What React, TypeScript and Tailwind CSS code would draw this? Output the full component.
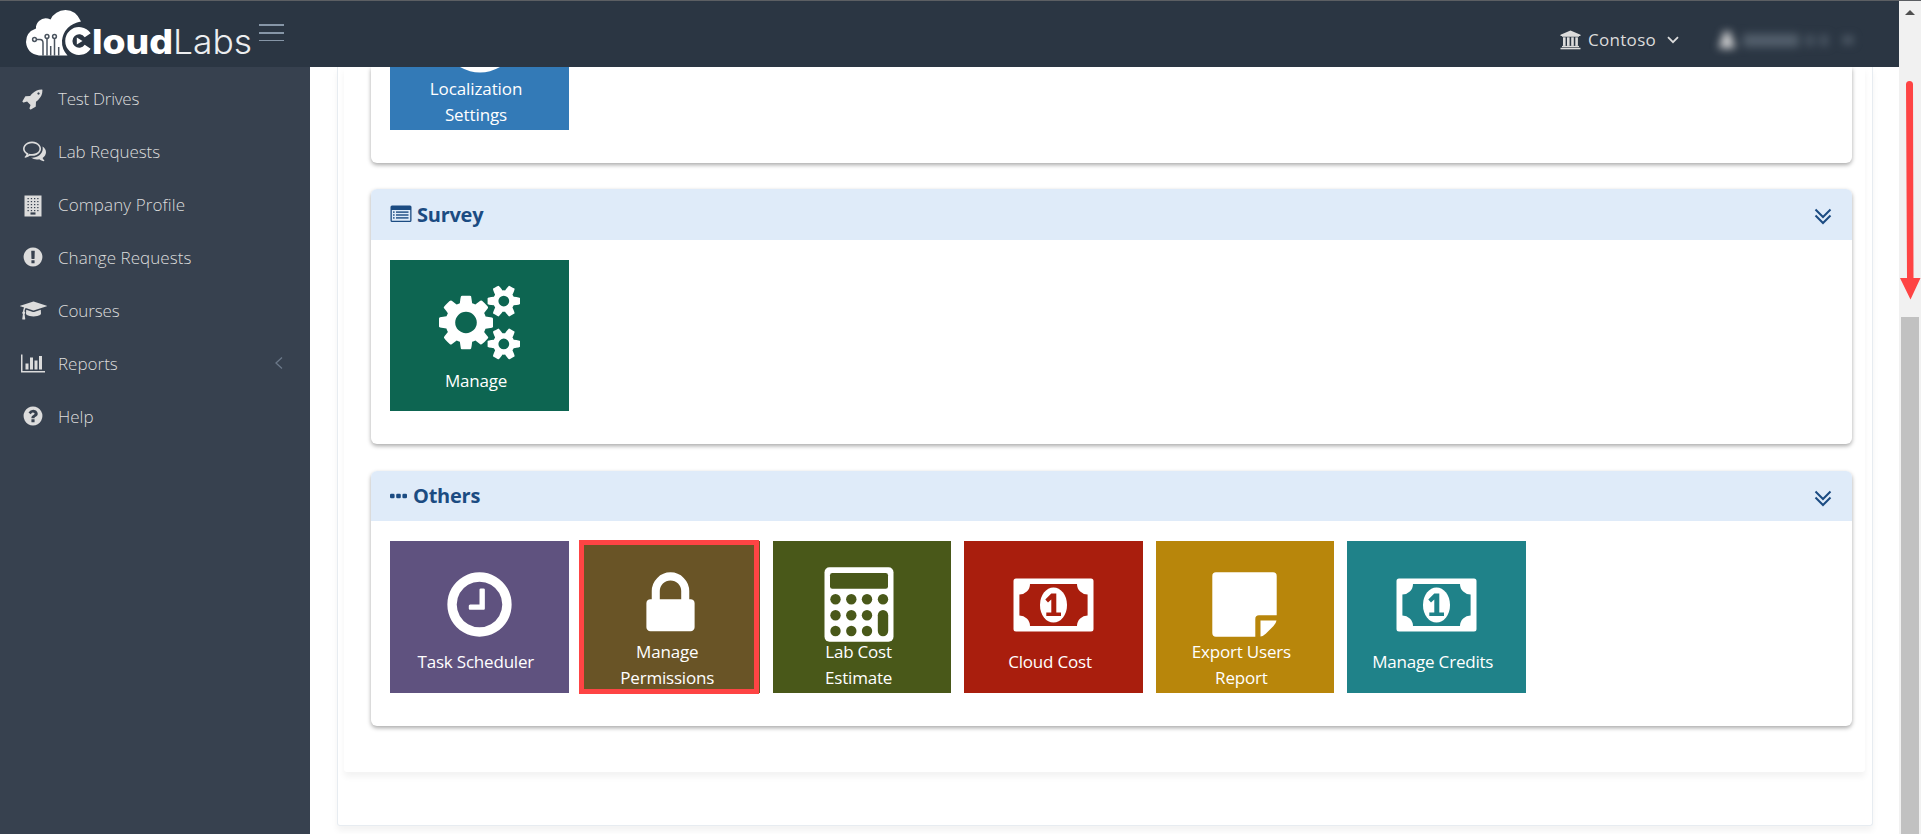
import React from "react";

const GEAR_SMALL =
  "v140q0 16-149 31-12 27-30 52 51 113 51 138 0 4-4 7-122 71-124 71-8 0-46-47t-52-68q-20 2-30 2t-30-2q-14 21-52 68t-46 47q-2 0-124-71-4-3-4-7 0-25 51-138-18-25-30-52-149-15-149-31v-140q0-16 149-31 13-29 30-52-51-113-51-138 0-4 4-7 4-2 35-20t59-34 30-16q8 0 46 46.5t52 67.5q20-2 30-2t30 2q51-71 92-112l6-2q4 0 124 70 4 3 4 7 0 25-51 138 17 23 30 52 149 15 149 31z";

const P = {
  cogs:
    "M896 896q0-106-75-181t-181-75-181 75-75 181 75 181 181 75 181-75 75-181zm768 512q0-52-38-90t-90-38-90 38-38 90q0 53 37.5 90.5t90.5 37.5 90.5-37.5 37.5-90.5zm0-1024q0-52-38-90t-90-38-90 38-38 90q0 53 37.5 90.5t90.5 37.5 90.5-37.5 37.5-90.5zm-384 421v185q0 10-7 19.5t-16 10.5l-155 24q-11 35-32 76 34 48 90 115 7 11 7 20 0 12-7 19-23 30-82.5 89.5t-78.5 59.5q-11 0-21-7l-115-90q-37 19-77 31-11 108-23 155-7 24-30 24h-186q-11 0-20-7.5t-10-17.5l-23-153q-34-10-75-31l-118 89q-7 7-20 7-11 0-21-8-144-133-144-160 0-9 7-19 10-14 41-53t47-61q-23-44-35-82l-152-24q-10-1-17-9.5t-7-19.5v-185q0-10 7-19.5t16-10.5l155-24q11-35 32-76-34-48-90-115-7-11-7-20 0-12 7-20 22-30 82-89t79-59q11 0 21 7l115 90q34-18 77-32 11-108 23-154 7-24 30-24h186q11 0 20 7.5t10 17.5l23 153q34 10 75 31l118-89q8-7 20-7 11 0 21 8 144 133 144 160 0 8-7 19-12 16-42 54t-45 60q23 48 34 82l152 23q10 2 17 10.5t7 19.5zM1920 1338" +
    GEAR_SMALL +
    "M1920 314" +
    GEAR_SMALL,
  lock: "M640 768h512v-192q0-106-75-181t-181-75-181 75-75 181v192zm832 96v576q0 40-28 68t-68 28h-960q-40 0-68-28t-28-68v-576q0-40 28-68t68-28h32v-192q0-184 132-316t316-132 316 132 132 316v192h32q40 0 68 28t28 68z",
  clock:
    "M1024 544v448q0 14-9 23t-23 9h-320q-14 0-23-9t-9-23v-64q0-14 9-23t23-9h224v-352q0-14 9-23t23-9h64q14 0 23 9t9 23zm416 352q0-148-73-273t-198-198-273-73-273 73-198 198-73 273 73 273 198 198 273 73 273-73 198-198 73-273zm224 0q0 209-103 385.5t-279.5 279.5-385.5 103-385.5-103-279.5-279.5-103-385.5 103-385.5 279.5-279.5 385.5-103 385.5 103 279.5 279.5 103 385.5z",
  exclaim:
    "M896 128q209 0 385.5 103t279.5 279.5 103 385.5-103 385.5-279.5 279.5-385.5 103-385.5-103-279.5-279.5-103-385.5 103-385.5 279.5-279.5 385.5-103zm128 1247v-190q0-14-9-23.5t-22-9.5h-192q-13 0-23 10t-10 23v190q0 13 10 23t23 10h192q13 0 22-9.5t9-23.5zm-2-344l18-621q0-12-10-18-10-8-24-8h-220q-14 0-24 8-10 6-10 18l17 621q0 10 10 17.5t24 7.5h185q14 0 23.5-7.5t10.5-17.5z",
  question:
    "M1024 1376v-192q0-14-9-23t-23-9h-192q-14 0-23 9t-9 23v192q0 14 9 23t23 9h192q14 0 23-9t9-23zm256-672q0-88-55.5-163t-138.5-116-170-41q-243 0-371 213-15 24 8 42l132 100q7 6 19 6 16 0 25-12 53-68 86-92 34-24 86-24 48 0 85.5 26t37.5 59q0 38-20 61t-68 45q-63 28-115.5 86.5t-52.5 125.5v36q0 14 9 23t23 9h192q14 0 23-9t9-23q0-19 21.5-49.5t54.5-49.5q32-18 49-28.5t46-35 44.5-48 28-60.5 12.5-81zm384 192q0 209-103 385.5t-279.5 279.5-385.5 103-385.5-103-279.5-279.5-103-385.5 103-385.5 279.5-279.5 385.5-103 385.5 103 279.5 279.5 103 385.5z",
  rocket:
    "M1440 448q0-40-28-68t-68-28-68 28-28 68 28 68 68 28 68-28 28-68zm224-288q0 249-75.5 430.5t-253.5 360.5q-81 80-195 176l-20 379q-2 16-16 26l-384 224q-7 4-16 4-12 0-23-9l-64-64q-13-14-8-32l85-276-281-281-276 85q-3 1-9 1-14 0-23-9l-64-64q-17-19-5-39l224-384q10-14 26-16l379-20q96-114 176-195 188-187 358-258t431-71q14 0 24 9.5t10 22.5z",
  comments:
    "M704 384q-153 0-286 52t-211.5 141-78.5 191q0 82 53 158t149 132l97 56-35 84q34-20 62-39l44-31 53 10q78 14 153 14 153 0 286-52t211.5-141 78.5-191-78.5-191-211.5-141-286-52zm0-128q191 0 353.5 68.5t256.5 186.5 94 257-94 257-256.5 186.5-353.5 68.5q-86 0-176-16-124 88-278 128-36 9-86 16h-3q-11 0-20.5-8t-11.5-21q-1-3-1-6.5t.5-6.5 2-6l2.5-5 3.5-5.5 4-5 4.5-5 4-4.5q5-6 23-25t26-29.5 22.5-29 25-38.5 20.5-44q-124-72-195-177t-71-224q0-139 94-257t256.5-186.5 353.5-68.5zm822 1169q10 24 20.5 44t25 38.5 22.5 29 26 29.5 23 25q1 1 4 4.5t4.5 5 4 5 3.5 5.5l2.5 5 2 6 .5 6.5-1 6.5q-3 14-13 22t-22 7q-50-7-86-16-154-40-278-128-90 16-176 16-271 0-472-132 58 4 88 4 161 0 309-45t264-129q125-92 192-212t67-254q0-77-23-152 129 71 204 178t75 230q0 120-71 224.5t-195 176.5z",
  cap: "M1774 836l18 316q4 69-82 128t-235 93.5-323 34.5-323-34.5-235-93.5-82-128l18-316 574 181q22 7 48 7t48-7zm530-324q0 23-22 31l-1120 352q-4 1-10 1t-10-1l-652-206q-43 34-71 111.5t-34 178.5q63 36 63 109 0 69-58 107l58 433q2 14-8 25-9 11-24 11h-192q-15 0-24-11-10-11-8-25l58-433q-58-38-58-107 0-73 65-111 11-207 98-330l-333-104q-22-8-22-31t22-31l1120-352q4-1 10-1t10 1l1120 352q22 8 22 31z",
  chart:
    "M640 896v512h-256v-512h256zm384-512v1024h-256v-1024h256zm1024 1152v128h-2048v-1536h128v1408h1920zm-640-896v768h-256v-768h256zm384-384v1152h-256v-1152h256z",
};

function Glyph({ d, w = 1792, className }: { d: string; w?: number; className: string }) {
  return (
    <svg viewBox={`0 0 ${w} 1792`} preserveAspectRatio="none" className={`shrink-0 ${className}`} fill="currentColor">
      <path d={d} />
    </svg>
  );
}

function Building() {
  return (
    <svg viewBox="0 0 18 22" className="mt-px h-[22px] w-[18px]">
      <rect x="0.5" y="0.5" width="17" height="21" fill="#dcdcdc" />
      {[3, 6, 9, 12, 15].map((y) =>
        [3.5, 6.8, 10, 13.2].map((x) => (
          <rect key={`${x}-${y}`} x={x} y={y} width="1.3" height="1.2" fill="#37414f" />
        )),
      )}
      <rect x="6.5" y="17.4" width="5" height="2.2" fill="#37414f" />
    </svg>
  );
}

function Bank() {
  return (
    <svg viewBox="0 0 21 20" className="h-5 w-[21px]" fill="#dcdcdc">
      <path d="M10.5 0.5 20.5 4.7V6H19v0.7H2V6H0.5V4.7z" />
      <rect x="3" y="7.3" width="2.6" height="8.6" />
      <rect x="7" y="7.3" width="2.6" height="8.6" />
      <rect x="11.2" y="7.3" width="2.6" height="8.6" />
      <rect x="15.3" y="7.3" width="2.6" height="8.6" />
      <rect x="2" y="15.9" width="17" height="1.3" />
      <rect x="0.5" y="17.8" width="20" height="1.5" />
    </svg>
  );
}

function Money() {
  return (
    <svg viewBox="0 0 81 54" className="h-[54px] w-[81px]">
      <path
        fillRule="evenodd"
        fill="white"
        d="M3 0.5H78Q80.500 0.500 80.500 3V51Q80.500 53.500 78 53.500H3Q0.500 53.500 0.500 51V3Q0.500 0.500 3 0.500zM17 6Q17 10.500 13.800 13.500Q10.800 16.500 6.400 16.500V37.500Q10.800 37.500 13.800 40.500Q17 43.500 17 48H64Q64 43.500 67.200 40.500Q70.200 37.500 74.600 37.500V16.500Q70.200 16.500 67.200 13.500Q64 10.500 64 6z"
      />
      <ellipse cx="40.500" cy="27" rx="13.500" ry="17.600" fill="white" />
      <path d="M38.300 15.500H43.300V34.500H48V38H33.300V34.500H38.300V21.500L35 24.600L32.300 21.500z" fill="currentColor" />
    </svg>
  );
}

function Calculator() {
  return (
    <svg viewBox="0 0 70 75" className="mr-[6px] h-[75px] w-[70px]">
      <rect x="0.500" y="0.300" width="69" height="74.400" rx="5" fill="white" />
      <g fill="currentColor">
        <rect x="6" y="6" width="58" height="15.700" rx="2.300" />
        {[11.5, 27.3, 43, 59].map((x) => (
          <circle key={x} cx={x} cy="32.300" r="5.200" />
        ))}
        {[48.2, 64].map((y) =>
          [11.5, 27.3, 43].map((x) => <circle key={`${x}-${y}`} cx={x} cy={y} r="5.200" />),
        )}
        <rect x="53.800" y="43" width="10.400" height="26.200" rx="5.200" />
      </g>
    </svg>
  );
}

function Note() {
  return (
    <svg viewBox="0 0 65 65" className="h-[65px] w-[65px]" fill="white">
      <path d="M4 0.300H61Q64.700 0.300 64.700 4V43.300H47Q43.300 43.300 43.300 47V64.700H4Q0.300 64.700 0.300 61V4Q0.300 0.300 4 0.300z" />
      <path d="M48.500 48.500H64.500Q64 51.500 61.500 54L54 61.500Q51.500 64 48.500 64.500z" />
    </svg>
  );
}

function Logo() {
  return (
    <svg viewBox="0 0 230 56" className="h-[56px] w-[230px]">
      <path
        d="M13 45.500H41.500Q35.500 39 36 30.500Q38 15 55 11.500Q50 0 39.500 0Q29 0.500 24.500 9.500Q18 6.500 13 11Q9.500 14.500 10 18.500Q0 22 0 32Q1 43.500 13 45.500z"
        fill="white"
      />
      <g fill="none" stroke="#2b3643" strokeWidth="1.500" opacity="0.850">
        <circle cx="8.500" cy="29.500" r="1.900" />
        <path d="M10.500 29.500H14Q17 29.500 17 33V45.500" />
        <circle cx="21" cy="26.500" r="1.900" />
        <path d="M21 29V45.500" />
        <circle cx="28.500" cy="26.500" r="1.900" />
        <path d="M28.500 29V45.500M24.700 36V45.500M32.700 37V45.500" />
      </g>
      <path d="M61.700 25.300A10.300 10.300 0 1 0 61.700 36.700" fill="none" stroke="white" strokeWidth="7.200" />
      <path d="M50.800 27.500V34.500L56.500 31z" fill="white" />
      <text
        x="66"
        y="44"
        textLength="81"
        lengthAdjust="spacingAndGlyphs"
        fontSize="34"
        className="fill-white font-['Inter',sans-serif] font-extrabold"
      >
        loud
      </text>
      <text
        x="147"
        y="44"
        textLength="79"
        lengthAdjust="spacingAndGlyphs"
        fontSize="34"
        className="fill-[#eceef0] font-['Inter',sans-serif] font-light"
      >
        Labs
      </text>
    </svg>
  );
}

const NAV = [
  { label: "Test Drives", track: "tracking-[-0.25px]", icon: <Glyph d={P.rocket} className="h-[22px] w-[22px]" /> },
  { label: "Lab Requests", track: "tracking-[-0.05px]", icon: <Glyph d={P.comments} className="-mt-[4px] ml-[2px] h-[25px] w-[23px]" /> },
  { label: "Company Profile", track: "tracking-[0.1px]", icon: <Building /> },
  { label: "Change Requests", track: "tracking-[0.05px]", icon: <Glyph d={P.exclaim} className="-mt-[2px] h-[22px] w-[22px]" /> },
  { label: "Courses", track: "tracking-[-0.1px]", icon: <Glyph d={P.cap} w={2304} className="-mt-px h-[21px] w-[27px]" /> },
  { label: "Reports", track: "tracking-normal", icon: <Glyph d={P.chart} w={2048} className="-mt-px h-[21px] w-6" />, sub: true },
  { label: "Help", track: "tracking-normal", icon: <Glyph d={P.question} className="-mt-[2px] h-[22px] w-[22px]" /> },
];

function Tile({
  color,
  icon,
  label,
  children,
}: {
  color: string;
  icon: React.ReactNode;
  label: React.ReactNode;
  children?: React.ReactNode;
}) {
  return (
    <div className={`relative flex shrink-0 flex-col items-center ${color}`}>
      <div className="flex h-[101px] shrink-0 items-center justify-center pt-[26px]">{icon}</div>
      <div className="flex h-[50px] min-h-0 flex-col items-center justify-end pr-[7px] text-center text-[17px] leading-[26px] tracking-[-0.2px] text-white">
        {label}
      </div>
      {children}
    </div>
  );
}

function Label({ a, b }: { a: string; b?: string }) {
  return b ? (
    <div className="pb-px">
      <div>{a}</div>
      <div>{b}</div>
    </div>
  ) : (
    <div className="pb-[17px]">{a}</div>
  );
}

function Panel({
  icon,
  title,
  head,
  body,
  children,
}: {
  icon: React.ReactNode;
  title: string;
  head: string;
  body: string;
  children: React.ReactNode;
}) {
  return (
    <section className="mb-[27px] w-[1481px] rounded-[6px] bg-white shadow-[0_2px_4px_rgba(0,0,0,0.34)]">
      <header className={`flex items-center justify-between rounded-t-[6px] bg-[#dfebf9] pl-[19px] pr-[20px] text-[#1b4b82] ${head}`}>
        <div className="flex items-center text-[20px] font-bold">
          {icon}
          <span className="tracking-[-0.25px]">{title}</span>
        </div>
        <svg viewBox="0 0 18 17" className="mt-1 h-[17px] w-[18px]" fill="none" stroke="currentColor" strokeWidth="2">
          <path d="M1.500 1.500 9 9l7.500-7.500M1.500 7.500 9 15l7.500-7.500" />
        </svg>
      </header>
      <div className={`flex items-start pl-[19px] pt-5 text-white ${body}`}>{children}</div>
    </section>
  );
}

export default function App() {
  return (
    <div className="flex h-[834px] w-[1921px] overflow-hidden bg-white font-['Open_Sans','Noto_Sans',sans-serif]">
      <div className="flex w-[1899px] flex-col">
        <header className="z-10 flex h-[67px] shrink-0 items-start border-t border-[#5c5f63] bg-[#2b3643] text-[#dcdcdc]">
          <div className="pl-[26px] pt-[9px]">
            <Logo />
          </div>
          <div className="ml-[3px] mt-[23px] flex w-[25px] flex-col">
            <div className="mb-[6px] h-[2px] bg-[#8696a7]" />
            <div className="mb-[6px] h-[2px] bg-[#8696a7]" />
            <div className="h-px bg-[#8696a7]" />
          </div>
          <div className="ml-auto mr-[40px] flex h-[78px] items-center">
            <Bank />
            <span className="ml-[7px] w-[69px] whitespace-nowrap text-[17px] tracking-[0.3px]">Contoso</span>
            <svg viewBox="0 0 12 8" className="ml-[10px] mr-px h-2 w-3" fill="none" stroke="#dcdcdc" strokeWidth="1.800">
              <path d="M1 1.200 6 6.200 11 1.200" />
            </svg>
            <div className="ml-[38px] flex w-[141px] items-center blur-[4px]">
              <svg viewBox="0 0 18 18" className="h-[18px] w-[18px]" fill="#dcdcdc">
                <circle cx="9" cy="5" r="4.500" />
                <path d="M1 17Q1 8 9 8T17 17z" />
              </svg>
              <span className="ml-[7px] h-[13px] w-[56px] bg-[#535f6c]" />
              <span className="ml-[7px] h-[11px] w-[8px] bg-[#4c5865]" />
              <span className="ml-[6px] h-[11px] w-[8px] bg-[#4c5865]" />
              <span className="ml-[15px] h-[8px] w-[10px] bg-[#535f6c]" />
            </div>
          </div>
        </header>

        <div className="flex min-h-0 flex-1">
          <nav className="w-[310px] shrink-0 bg-[#37414f] pt-[6px] text-[#dcdcdc]">
            {NAV.map((n) => (
              <div key={n.label} className="flex h-[52.900px] items-center">
                <div className="ml-[15px] flex w-9 justify-center">{n.icon}</div>
                <span className={`-mt-px ml-[7px] text-[17px] font-light ${n.track}`}>{n.label}</span>
                {n.sub && (
                  <svg viewBox="0 0 8 12" className="-mt-px ml-auto mr-[27px] h-3 w-2" fill="none" stroke="#6b7889" strokeWidth="1.300">
                    <path d="M7 0.500 1 6l6 5.500" />
                  </svg>
                )}
              </div>
            ))}
          </nav>

          <main className="h-[767px] flex-1 overflow-hidden pl-[27px]">
            <div className="h-[759px] w-[1536px] rounded-b-[3px] border border-t-0 border-[#e7ecf1] pl-[6px] shadow-[0_5px_6px_rgba(0,0,0,0.05)]">
              <div className="h-[705px] w-[1521px] rounded-b-[3px] bg-white pl-[27px] shadow-[0_5px_6px_rgba(0,0,0,0.05)]">
                <section className="mb-[26px] flex h-[96px] w-[1481px] rounded-b-[6px] pl-[19px] shadow-[0_2px_4px_rgba(0,0,0,0.34)]">
                  <div className="flex h-[63px] w-[179px] flex-col items-center overflow-hidden bg-[#337ab7] text-center text-[17px] leading-[26px] tracking-[-0.1px] text-white">
                    <svg viewBox="0 0 48 6" className="h-[6px] w-12 shrink-0">
                      <path d="M4 0Q24 11 44 0z" fill="white" />
                    </svg>
                    <div className="pr-[7px] pt-[3px]">
                      <div>Localization</div>
                      <div>Settings</div>
                    </div>
                  </div>
                </section>

                <Panel
                  title="Survey"
                  head="h-[51px]"
                  body="h-[204px]"
                  icon={
                    <svg viewBox="0 0 22 18" className="-mt-[2px] mr-[5px] h-[18px] w-[22px]" fill="currentColor">
                      <path fillRule="evenodd" d="M2 0.500H20Q21.500 0.500 21.500 2V15.500Q21.500 17 20 17H2Q0.500 17 0.500 15.500V2Q0.500 0.500 2 0.500zM1.800 5V15.700H20.200V5z" />
                      {[6.4, 9.3, 12.2].map((y) => (
                        <g key={y}>
                          <rect x="3" y={y} width="1.600" height="1.400" />
                          <rect x="6" y={y} width="12.500" height="1.400" />
                        </g>
                      ))}
                    </svg>
                  }
                >
                  <Tile
                    color="h-[151px] w-[179px] bg-[#0d6551]"
                    icon={<Glyph d={P.cogs} w={1920} className="-mt-[2px] h-[75px] w-[81px]" />}
                    label={<Label a="Manage" />}
                  />
                </Panel>

                <Panel
                  title="Others"
                  head="h-[50px]"
                  body="h-[205px]"
                  icon={
                    <svg viewBox="0 0 17 6" className="mr-[6px] h-[6px] w-[17px]" fill="currentColor">
                      <rect x="0" y="0.700" width="4.600" height="4.600" rx="1.300" />
                      <rect x="6.200" y="0.700" width="4.600" height="4.600" rx="1.300" />
                      <rect x="12.400" y="0.700" width="4.600" height="4.600" rx="1.300" />
                    </svg>
                  }
                >
                  <div className="flex gap-[12.800px]">
                    <Tile color="h-[152px] w-[178.600px] bg-[#5f527f]" icon={<Glyph d={P.clock} className="h-[75px] w-[75px]" />} label={<Label a="Task Scheduler" />} />
                    <Tile color="h-[152px] w-[178.600px] bg-[#695426]" icon={<Glyph d={P.lock} className="h-[75px] w-[75px]" />} label={<Label a="Manage" b="Permissions" />}>
                      <div className="absolute -left-[2px] -top-[1px] h-[154px] w-[180px] border-[5px] border-[#fe4444]" />
                    </Tile>
                    <Tile color="h-[152px] w-[178.600px] bg-[#495819] text-[#495819]" icon={<Calculator />} label={<Label a="Lab Cost" b="Estimate" />} />
                    <Tile color="h-[152px] w-[178.600px] bg-[#a91e0d] text-[#a91e0d]" icon={<Money />} label={<Label a="Cloud Cost" />} />
                    <Tile color="h-[152px] w-[178.600px] bg-[#b8860b]" icon={<Note />} label={<Label a="Export Users" b="Report" />} />
                    <Tile color="h-[152px] w-[178.600px] bg-[#1f8289] text-[#1f8289]" icon={<Money />} label={<Label a="Manage Credits" />} />
                  </div>
                </Panel>
              </div>
            </div>
          </main>
        </div>
      </div>

      <div className="relative flex w-[22px] flex-col items-center border-t border-[#5c5f63] bg-[#f1f1f1]">
        <svg viewBox="0 0 10 5" className="mt-[9px] h-[5px] w-[10px]" fill="#505050">
          <path d="M5 0 10 5H0z" />
        </svg>
        <div className="mt-[302px] w-[18px] flex-1 bg-[#c1c1c1]" />
        <svg viewBox="0 0 22 220" className="absolute left-0 top-[80px] h-[220px] w-[22px]" fill="#fe4444">
          <path d="M7 3.500Q7 0 10.500 0T14 3.500L14.500 197H21.500L11.500 218.500 1 197H8z" />
        </svg>
      </div>
    </div>
  );
}
